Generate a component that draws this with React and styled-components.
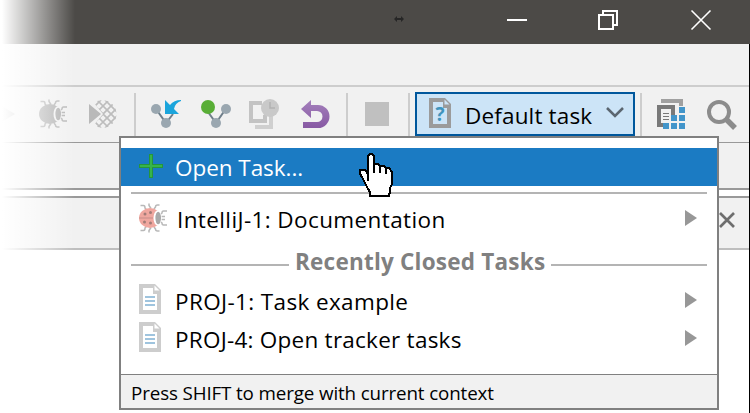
import React from "react";
import styled, { createGlobalStyle } from "styled-components";

const GlobalStyle = createGlobalStyle`
  * { box-sizing: border-box; }
  html, body { margin: 0; padding: 0; }
  body { background: #fff; overflow: hidden; font-family: "Open Sans", "Noto Sans", sans-serif; }
  svg { display: block; flex: none; overflow: visible; }
`;

const Window = styled.div`
  position: relative;
  width: 750px;
  height: 413px;
  overflow: hidden;
  background: #fff;
  display: flex;
  flex-direction: column;
`;

const TitleBar = styled.header`
  height: 44px;
  flex: none;
  background: #4c4a47;
  display: flex;
  align-items: center;
  justify-content: flex-end;
  padding: 0 39px 4px 0;
`;

const WindowButton = styled.span`
  display: flex;
  margin-left: ${(p) => p.$gap}px;
`;

const Frame = styled.main`
  flex: 1;
  display: flex;
  flex-direction: column;
  border-right: 1px solid #000;
`;

const MenuStrip = styled.div`
  height: 43px;
  flex: none;
  background: #f1f1f1;
  border-bottom: 2px solid #cdcdcd;
`;

const Toolbar = styled.div`
  height: 56px;
  flex: none;
  background: #f1f1f1;
  border-bottom: 1px solid #999;
  display: flex;
  align-items: flex-start;
  padding-top: 5px;
`;

const ToolIcon = styled.span`
  display: flex;
  flex: none;
  margin: ${(p) => p.$top ?? 8}px 0 0 ${(p) => p.$gap}px;
`;

const ToolDivider = styled.span`
  flex: none;
  width: 2px;
  height: 45px;
  margin: 1px 0 0 ${(p) => p.$gap}px;
  background: #cdcdcd;
`;

const TaskCombo = styled.button`
  flex: none;
  width: 220px;
  height: 44px;
  margin: 0 0 0 5px;
  padding: 0 9px 2px 12px;
  border: 2px solid #00579c;
  background: #cce4f7;
  display: flex;
  align-items: center;
  font: inherit;
`;

const ComboLabel = styled.span`
  flex: 1;
  margin-left: 14px;
  padding-top: 6px;
  text-align: left;
  font-size: 22.5px;
  line-height: 30px;
  letter-spacing: ${(p) => p.$track}px;
  white-space: nowrap;
  color: #000;
`;

const NavStrip = styled.div`
  height: 47px;
  flex: none;
  background: #f1f1f1;
  border-bottom: 2px solid #999;
`;

const TabStrip = styled.div`
  height: 54px;
  flex: none;
  margin-top: 6px;
  background: #f1f1f1;
  border-top: 2px solid #999;
  border-bottom: 2px solid #bebebe;
  display: flex;
  justify-content: flex-end;
  padding: 14px 14px 0 0;
`;

const Fade = styled.div`
  position: absolute;
  left: 0;
  top: 0;
  width: 75px;
  height: 413px;
  background: linear-gradient(to right, #fff 2px, rgba(255, 255, 255, 0) 75px);
`;

const Popup = styled.section`
  position: absolute;
  left: 119px;
  top: 136px;
  width: 600px;
  height: 274px;
  border: 2px solid #808080;
  background: #fff;
  display: flex;
  flex-direction: column;
  padding-top: 10px;
`;

const Item = styled.div`
  height: 38px;
  flex: none;
  display: flex;
  align-items: center;
  padding: 0 20px 0 18px;
  background: ${(p) => (p.$active ? "#1b7bc3" : "transparent")};
  color: ${(p) => (p.$active ? "#fff" : "#000")};
`;

const ItemIcon = styled.span`
  width: ${(p) => p.$w || 36}px;
  flex: none;
  display: flex;
  margin-bottom: ${(p) => p.$lift || 0}px;
`;

const ItemText = styled.span`
  flex: 1;
  padding-top: ${(p) => p.$drop || 4}px;
  font-size: 22.5px;
  line-height: 30px;
  letter-spacing: ${(p) => p.$track}px;
  white-space: nowrap;
`;

const Rule = styled.div`
  height: 2px;
  flex: none;
  margin: 6px 10px 5px;
  background: #b4b4b4;
`;

const SectionHeader = styled.div`
  height: 44px;
  flex: none;
  margin: 0 10px;
  padding-top: 3px;
  display: flex;
  align-items: flex-start;
`;

const HeaderLine = styled.span`
  width: ${(p) => p.$w}px;
  flex: none;
  height: 2px;
  margin-top: 24px;
  background: #b4b4b4;
`;

const HeaderText = styled.span`
  flex: 1;
  padding: 7px 0 0 6px;
  font-size: 22.5px;
  line-height: 30px;
  font-weight: 700;
  letter-spacing: ${(p) => p.$track}px;
  white-space: nowrap;
  color: #808080;
`;

const Footer = styled.footer`
  margin-top: auto;
  height: 34px;
  flex: none;
  border-top: 1px solid #808080;
  background: #f1f1f1;
  padding: 4px 0 0 10px;
  font-size: 18.800px;
  line-height: 28px;
  letter-spacing: ${(p) => p.$track}px;
  white-space: nowrap;
  color: #000;
`;

const Pointer = styled.div`
  position: absolute;
  left: 359px;
  top: 153px;
`;

const ResizeMark = styled.div`
  position: absolute;
  left: 394px;
  top: 15px;
`;

const Bug = ({ body, shell, head, back = "#f1f1f1", dots }) => (
  <svg width="28" height="30" viewBox="0 0 28 30" fill="none">
    <g stroke={shell} strokeWidth="1.500">
      <path d="M1.500 2.500h3q1.500 0 1.500 2.500l1.500 2M10 .5v2l2 3M20.500 2h-2q-2 0-2 2l-1.500 2M1.500 27.500h3q1.500 0 1.500-2.500l1.500-2M10 29.500v-2l2-3M20.500 28h-2q-2 0-2-2l-1.500-2" />
      <path d="M28 8h-3.500q-1.500 0-1.500 2l-1 1M28 22h-3.500q-1.500 0-1.500-2l-1-1M22.500 13.500h3.500M22.500 16.500h3.500" />
    </g>
    <ellipse cx="11" cy="15" rx="11" ry="10" fill={body} />
    <ellipse cx="18.500" cy="15" rx="4" ry="7.600" fill={back} />
    <ellipse cx="19.200" cy="15" rx="2.800" ry="6.300" fill={head} />
    {dots && (
      <g fill={dots}>
        <circle cx="6" cy="11" r="1.500" /><circle cx="11.500" cy="9.500" r="1.500" />
        <circle cx="5.500" cy="19" r="1.500" /><circle cx="11.500" cy="20" r="1.500" />
        <path d="M0 14.400h14v1.200H0z" opacity=".45" />
      </g>
    )}
  </svg>
);

const FadedPlay = () => (
  <svg width="15" height="28" viewBox="0 0 15 28"><path d="M0 5l15 9-15 9z" fill="#bbb" /></svg>
);

const Coverage = () => (
  <svg width="28" height="28" viewBox="0 0 28 28">
    <defs><clipPath id="cov"><path d="M5 3A13.900 13.900 0 1 1 5 25L14 14z" /></clipPath></defs>
    <g clipPath="url(#cov)" stroke="#bdbdbd" strokeWidth="1.600">
      {[-24, -16, -8, 0, 8, 16, 24].map((n) => (
        <path key={n} d={`M${n} 0l28 28M${28 - n} 0l-28 28`} />
      ))}
    </g>
    <path d="M0 4l12 10L0 24z" fill="#b9b9b9" />
  </svg>
);

const VcsUpdate = () => (
  <svg width="30" height="28" viewBox="0 0 30 28">
    <path d="M5 9l10 14 7-9" stroke="#6f7f8b" strokeWidth="2" fill="none" />
    <circle cx="5" cy="9" r="5" fill="#9aa7b0" /><circle cx="15" cy="23" r="5" fill="#9aa7b0" />
    <path d="M14 0l5 5Q23 0 30 0v1Q24 3 23 9l5 5H14z" fill="#1ba5dc" />
  </svg>
);

const VcsCommit = () => (
  <svg width="30" height="28" viewBox="0 0 30 28">
    <path d="M7 12l8 11 9-13" stroke="#6f7f8b" strokeWidth="2" fill="none" />
    <circle cx="25" cy="9" r="5" fill="#9aa7b0" /><circle cx="15" cy="23" r="5" fill="#9aa7b0" />
    <circle cx="7" cy="7" r="7" fill="#59ae36" />
  </svg>
);

const History = () => (
  <svg width="30" height="30" viewBox="0 0 30 30">
    <path d="M6 25v5h18V16h-4v10H6z" fill="#cfcfcf" />
    <path d="M0 2h13v4H4v14h10v-4h4v8H0z" fill="#c3c3c3" />
    <circle cx="21" cy="9" r="9" fill="#c9c9c9" />
    <path d="M21 3v6h5" stroke="#b2b2b2" strokeWidth="1.500" fill="none" />
  </svg>
);

const Undo = () => (
  <svg width="28" height="28" viewBox="0 0 28 28">
    <defs><linearGradient id="un" x1="0" y1="0" x2="0" y2="1"><stop stopColor="#a480bc" /><stop offset="1" stopColor="#8759a3" /></linearGradient></defs>
    <path d="M10 0v5h7a11.500 11.500 0 0 1 0 23H2v-6h14a5.500 5.500 0 0 0 0-11h-6v7L0 9z" fill="url(#un)" />
  </svg>
);

const QuestionMark = styled.text`
  font-size: 19px;
  font-weight: 700;
`;

const Doc = ({ question }) => (
  <svg width="22" height="30" viewBox="0 0 22 30">
    <path d="M0 0h16l6 6v24H0z" fill={question ? "#9b9b9b" : "#cdcdcd"} />
    <path d="M4 4h10v6h4v16H4z" fill={question ? "#cce4f7" : "#fff"} />
    <path d="M15.500 1.500v5h5z" fill={question ? "#cce4f7" : "#fff"} />
    {question ? (
      <QuestionMark x="11" y="23" textAnchor="middle" fill="#4094bd">?</QuestionMark>
    ) : (
      <path d="M6 13h10M6 17h10M6 21h10" stroke="#9fc4de" strokeWidth="2" />
    )}
  </svg>
);

const Structure = () => (
  <svg width="28" height="30" viewBox="0 0 28 30">
    <path d="M4 0h22v7h-4V4H4z" fill="#a0a0a0" />
    <path d="M0 6h18v10h-4V10H4v14h2v4H0z" fill="#797979" />
    <path d="M6 14.500h6M6 17.500h6M6 20.500h6" stroke="#777" strokeWidth="1.200" />
    <path d="M22 8h6v6h-6zM14 16h6v6h-6zM22 16h6v6h-6zM6 24h6v6H6zM14 24h6v6h-6zM22 24h6v6h-6z" fill="#4295ca" />
  </svg>
);

const Search = () => (
  <svg width="30" height="30" viewBox="0 0 30 30" fill="none" stroke="#8c8c8c">
    <circle cx="12" cy="12" r="10" strokeWidth="4" /><path d="M19 19l9 9" strokeWidth="5.500" />
  </svg>
);

const Plus = () => (
  <svg width="24" height="24" viewBox="0 0 24 24">
    <path d="M10 0h4v10h10v4H14v10h-4V14H0v-4h10z" fill="#25953b" />
    <path d="M11 1h2v10h10v2H13v10h-2V13H1v-2h10z" fill="#36b44b" />
  </svg>
);

const SubmenuArrow = () => (
  <svg width="12" height="16" viewBox="0 0 12 16"><path d="M0 0l12 8-12 8z" fill="#979797" /></svg>
);

const Hand = () => (
  <svg width="36" height="45" viewBox="0 0 36 45" shapeRendering="crispEdges">
    <path
      d="M11 1h2l2 2v8h4l2 2h4l2 2h3l3 4v12l-2 4v3l-1 5H11v-4l-2-3-2-4-2-4-2-4-2-3v-4h5l3 4V3z"
      fill="#fff" stroke="#000" strokeWidth="2"
    />
    <path d="M15 11v9M21 13v7M27 15v6M9 20v8" stroke="#000" strokeWidth="2" />
  </svg>
);

export default function App() {
  return (
    <Window>
      <GlobalStyle />
      <TitleBar>
        <WindowButton><svg width="20" height="20"><path d="M0 10h20" stroke="#fff" strokeWidth="2" /></svg></WindowButton>
        <WindowButton $gap={71}>
          <svg width="20" height="20" fill="none" stroke="#fff" strokeWidth="2"><path d="M1 5h14v14H1zM5 5V1h14v14h-4" /></svg>
        </WindowButton>
        <WindowButton $gap={73}>
          <svg width="20" height="20" stroke="#fff" strokeWidth="1.600"><path d="M.5.500l19 19M19.500.500l-19 19" /></svg>
        </WindowButton>
      </TitleBar>
      <Frame>
        <MenuStrip />
        <Toolbar>
          <ToolIcon $gap={0}><FadedPlay /></ToolIcon>
          <ToolIcon $gap={24} $top={7}><Bug body="#b3b3b3" shell="#b5b5b5" head="#b0b0b0" /></ToolIcon>
          <ToolIcon $gap={22}><Coverage /></ToolIcon>
          <ToolDivider $gap={17} />
          <ToolIcon $gap={15}><VcsUpdate /></ToolIcon>
          <ToolIcon $gap={20}><VcsCommit /></ToolIcon>
          <ToolIcon $gap={18} $top={7}><History /></ToolIcon>
          <ToolIcon $gap={22}><Undo /></ToolIcon>
          <ToolDivider $gap={17} />
          <ToolIcon $gap={17} $top={10}><svg width="24" height="24"><path d="M0 0h24v24H0z" fill="#c0c0c0" /></svg></ToolIcon>
          <ToolDivider $gap={19} />
          <TaskCombo>
            <Doc question />
            <ComboLabel $track={0.15}>Default task</ComboLabel>
            <svg width="18" height="12" fill="none" stroke="#5b6670" strokeWidth="2.500"><path d="M1 1l8 8 8-8" /></svg>
          </TaskCombo>
          <ToolDivider $gap={5} />
          <ToolIcon $gap={15} $top={7}><Structure /></ToolIcon>
          <ToolIcon $gap={22}><Search /></ToolIcon>
        </Toolbar>
        <NavStrip />
        <TabStrip>
          <svg width="16" height="16" stroke="#6e6e6e" strokeWidth="2.700"><path d="M1 1l14 14M15 1L1 15" /></svg>
        </TabStrip>
      </Frame>
      <Fade />
      <ResizeMark>
        <svg width="10" height="8"><path d="M0 4l3-3v2h4V1l3 3-3 3V5H3v2z" fill="#262626" /></svg>
      </ResizeMark>
      <Popup>
        <Item $active>
          <ItemIcon $lift={2}><Plus /></ItemIcon>
          <ItemText $drop={2} $track={-0.05}>Open Task...</ItemText>
        </Item>
        <Rule />
        <Item>
          <ItemIcon $w={38}><Bug body="#f0a79f" shell="#b8b8b8" head="#a9a9a9" back="#fff" dots="#a37c78" /></ItemIcon>
          <ItemText $track={0.39}>IntelliJ-1: Documentation</ItemText>
          <SubmenuArrow />
        </Item>
        <SectionHeader>
          <HeaderLine $w={158} />
          <HeaderText $track={0.22}>Recently Closed Tasks</HeaderText>
          <HeaderLine $w={156} />
        </SectionHeader>
        <Item>
          <ItemIcon $lift={2}><Doc /></ItemIcon>
          <ItemText $track={0.37}>PROJ-1: Task example</ItemText>
          <SubmenuArrow />
        </Item>
        <Item>
          <ItemIcon $lift={2}><Doc /></ItemIcon>
          <ItemText $track={0.25}>PROJ-4: Open tracker tasks</ItemText>
          <SubmenuArrow />
        </Item>
        <Footer $track={-0.13}>Press SHIFT to merge with current context</Footer>
      </Popup>
      <Pointer><Hand /></Pointer>
    </Window>
  );
}
